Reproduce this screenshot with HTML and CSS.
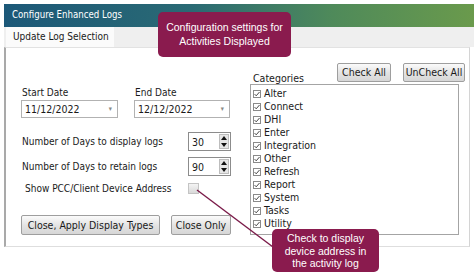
FILE: index.html
```html
<!DOCTYPE html>
<html>
<head>
<meta charset="utf-8">
<link rel="stylesheet" href="styles.css">
</head>
<body>
<div class="dialog">
  <div class="titlebar">Configure Enhanced Logs</div>
  <div class="tabstrip"><div class="tab">Update Log Selection</div></div>
  <div class="page">
    <div class="left">
      <div class="dates">
        <div class="field">
          <div class="lbl">Start Date</div>
          <div class="datebox"><span>11/12/2022</span><span class="dd">&#9662;</span></div>
        </div>
        <div class="field">
          <div class="lbl">End Date</div>
          <div class="datebox end"><span>12/12/2022</span><span class="dd">&#9662;</span></div>
        </div>
      </div>
      <div class="numrow first">
        <div class="lbl">Number of Days to display logs</div>
        <div class="spin"><span>30</span><span class="arrows"><i class="up"></i><i class="down"></i></span></div>
      </div>
      <div class="numrow">
        <div class="lbl">Number of Days to retain logs</div>
        <div class="spin"><span>90</span><span class="arrows"><i class="up"></i><i class="down"></i></span></div>
      </div>
      <div class="checkrow">
        <div class="lbl">Show PCC/Client Device Address</div>
        <div class="cb"></div>
      </div>
      <div class="buttons">
        <div class="btn wide">Close, Apply Display Types</div>
        <div class="btn">Close Only</div>
      </div>
    </div>
    <div class="right">
      <div class="righthead">
        <div class="lbl cat">Categories</div>
        <div class="btn small">Check All</div>
        <div class="btn small un">UnCheck All</div>
      </div>
      <ul class="list">
        <li><svg viewBox="0 0 8 8"><rect x="0.5" y="0.5" width="7" height="7" fill="#fff" stroke="#8a8a8a"/><path d="M1.6 4.1 L3.2 5.8 L6.5 2" fill="none" stroke="#333" stroke-width="0.9"/></svg>Alter</li>
        <li><svg viewBox="0 0 8 8"><rect x="0.5" y="0.5" width="7" height="7" fill="#fff" stroke="#8a8a8a"/><path d="M1.6 4.1 L3.2 5.8 L6.5 2" fill="none" stroke="#333" stroke-width="0.9"/></svg>Connect</li>
        <li><svg viewBox="0 0 8 8"><rect x="0.5" y="0.5" width="7" height="7" fill="#fff" stroke="#8a8a8a"/><path d="M1.6 4.1 L3.2 5.8 L6.5 2" fill="none" stroke="#333" stroke-width="0.9"/></svg>DHI</li>
        <li><svg viewBox="0 0 8 8"><rect x="0.5" y="0.5" width="7" height="7" fill="#fff" stroke="#8a8a8a"/><path d="M1.6 4.1 L3.2 5.8 L6.5 2" fill="none" stroke="#333" stroke-width="0.9"/></svg>Enter</li>
        <li><svg viewBox="0 0 8 8"><rect x="0.5" y="0.5" width="7" height="7" fill="#fff" stroke="#8a8a8a"/><path d="M1.6 4.1 L3.2 5.8 L6.5 2" fill="none" stroke="#333" stroke-width="0.9"/></svg>Integration</li>
        <li><svg viewBox="0 0 8 8"><rect x="0.5" y="0.5" width="7" height="7" fill="#fff" stroke="#8a8a8a"/><path d="M1.6 4.1 L3.2 5.8 L6.5 2" fill="none" stroke="#333" stroke-width="0.9"/></svg>Other</li>
        <li><svg viewBox="0 0 8 8"><rect x="0.5" y="0.5" width="7" height="7" fill="#fff" stroke="#8a8a8a"/><path d="M1.6 4.1 L3.2 5.8 L6.5 2" fill="none" stroke="#333" stroke-width="0.9"/></svg>Refresh</li>
        <li><svg viewBox="0 0 8 8"><rect x="0.5" y="0.5" width="7" height="7" fill="#fff" stroke="#8a8a8a"/><path d="M1.6 4.1 L3.2 5.8 L6.5 2" fill="none" stroke="#333" stroke-width="0.9"/></svg>Report</li>
        <li><svg viewBox="0 0 8 8"><rect x="0.5" y="0.5" width="7" height="7" fill="#fff" stroke="#8a8a8a"/><path d="M1.6 4.1 L3.2 5.8 L6.5 2" fill="none" stroke="#333" stroke-width="0.9"/></svg>System</li>
        <li><svg viewBox="0 0 8 8"><rect x="0.5" y="0.5" width="7" height="7" fill="#fff" stroke="#8a8a8a"/><path d="M1.6 4.1 L3.2 5.8 L6.5 2" fill="none" stroke="#333" stroke-width="0.9"/></svg>Tasks</li>
        <li><svg viewBox="0 0 8 8"><rect x="0.5" y="0.5" width="7" height="7" fill="#fff" stroke="#8a8a8a"/><path d="M1.6 4.1 L3.2 5.8 L6.5 2" fill="none" stroke="#333" stroke-width="0.9"/></svg>Utility</li>
      </ul>
    </div>
  </div>
</div>
<svg class="connector" width="474" height="279" viewBox="0 0 474 279"><line x1="197" y1="190" x2="273" y2="247" stroke="#7a1a48" stroke-width="1.4"/></svg>
<div class="callout top">Configuration settings for<br>Activities Displayed</div>
<div class="callout bottom">Check to display<br>device address in<br>the activity log</div>
</body>
</html>
```
FILE: styles.css
```css
html, body { margin: 0; padding: 0; background: #fff; }
body { width: 474px; height: 279px; position: relative; overflow: hidden; font-family: "DejaVu Sans Condensed", "DejaVu Sans", sans-serif; font-size: 10px; color: #1a1a1a; }
.dialog { margin: 4px 0 0 4px; width: 470px; }
.titlebar { height: 23px; line-height: 22px; padding-left: 8px; color: #fff; font-size: 9.6px; background: linear-gradient(90deg, #1c5878 0%, #2a6a74 40%, #4f8a5a 70%, #6a9a4c 100%); }
.tabstrip { height: 20px; background: #efefef; display: flex; }
.tab { margin-left: 2px; width: 108px; padding-left: 7px; box-sizing: border-box; line-height: 20px; background: #fbfbfb; font-size: 10px; }
.page { height: 200px; box-sizing: border-box; border-left: 2px solid #a9a9a9; border-right: 1px solid #d4d4d4; border-bottom: 1px solid #dedede; border-top: 1px solid #e2e2e2; margin-right: 4px; display: flex; background: #fff; }
.lbl { line-height: 13px; white-space: nowrap; }
.left { padding: 38px 0 0 15px; width: 229px; box-sizing: border-box; flex: none; }
.dates { display: flex; gap: 16px; }
.field .lbl { padding-left: 1px; }
.datebox { margin-top: 1px; width: 97px; height: 18px; box-sizing: border-box; border: 1px solid #b2b2b2; display: flex; justify-content: space-between; align-items: center; padding: 0 5px 0 3px; font-size: 10.5px; }
.datebox.end { width: 96px; }
.dd { color: #888; font-size: 7px; }
.numrow { display: flex; align-items: center; margin-top: 14px; }
.numrow + .numrow { margin-top: 6px; }
.numrow .lbl { width: 166px; padding-left: 1px; }
.spin { width: 43px; height: 19px; box-sizing: border-box; border: 1px solid #8c8c8c; display: flex; justify-content: space-between; align-items: center; padding: 0 1px 0 3px; font-size: 10.5px; }
.arrows { display: flex; flex-direction: column; width: 10px; height: 15px; background: #e6e6e6; border: 1px solid #bdbdbd; box-sizing: border-box; align-items: center; justify-content: space-around; }
.arrows i { display: block; width: 0; height: 0; border-left: 3px solid transparent; border-right: 3px solid transparent; }
.arrows .up { border-bottom: 4px solid #111; }
.arrows .down { border-top: 4px solid #111; }
.checkrow { display: flex; align-items: center; margin-top: 6px; }
.checkrow .lbl { width: 163px; padding-left: 4px; }
.cb { width: 9px; height: 9px; border: 1px solid #c4c4c4; background: linear-gradient(#f4f4f4, #d9d9d9); }
.buttons { display: flex; gap: 11px; margin-top: 20px; }
.btn { height: 20px; box-sizing: border-box; border: 1px solid #9e9e9e; border-radius: 2px; background: linear-gradient(#fbfbfb, #e4e4e4 50%, #d6d6d6); line-height: 18px; text-align: center; font-size: 10.5px; white-space: nowrap; }
.btn.wide { width: 139px; }
.buttons .btn:last-child { width: 60px; }
.right { flex: 1; padding: 15px 0 0 15px; }
.righthead { display: flex; align-items: flex-end; }
.lbl.cat { margin-left: 3px; width: 84px; font-size: 10.5px; line-height: 12px; }
.btn.small { width: 54px; height: 19px; margin-bottom: 2px; line-height: 17px; }
.btn.un { width: 62px; margin-left: 12px; }
.list { list-style: none; margin: 0; padding: 2px 0 0 2px; width: 209px; height: 151px; box-sizing: border-box; border: 1px solid #a4a4a4; }
.list li { height: 13px; line-height: 13px; display: flex; align-items: center; font-size: 10.5px; }
.list svg { width: 8px; height: 8px; margin-right: 3px; flex: none; }
.connector { position: absolute; left: 0; top: 0; }
.callout { position: absolute; background: #8a1b4e; color: #fff; font-family: "Liberation Sans", Arial, sans-serif; font-size: 10.5px; text-align: center; border-radius: 5px; box-sizing: border-box; }
.callout.top { left: 158px; top: 12px; width: 133px; height: 45px; line-height: 14px; padding-top: 8px; }
.callout.bottom { left: 272px; top: 229px; width: 107px; height: 43px; line-height: 12.5px; padding-top: 3px; }
```
